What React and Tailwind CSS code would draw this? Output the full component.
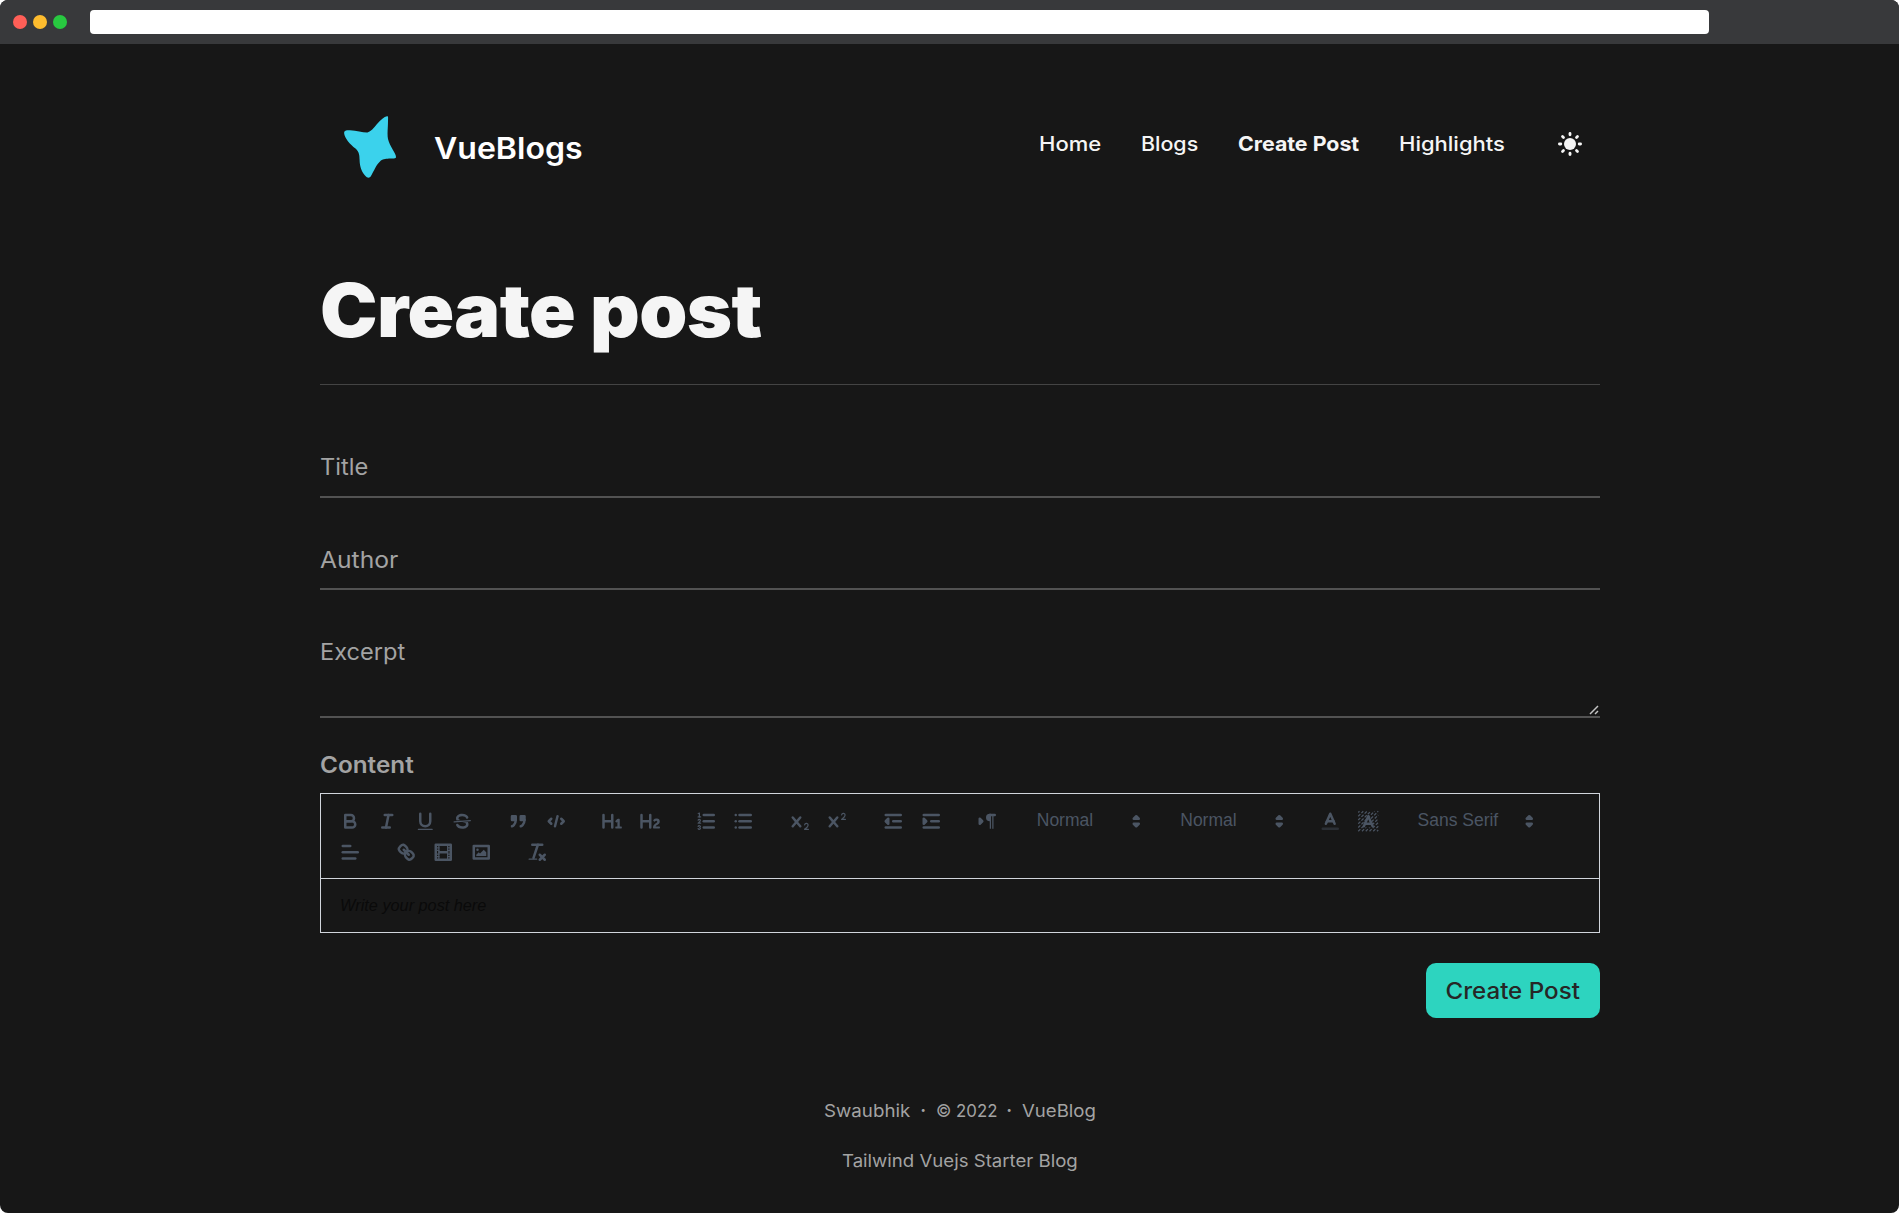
import React from "react";

const stroke = { fill: "none", stroke: "currentColor", strokeWidth: 2, strokeLinecap: "round", strokeLinejoin: "round" };
const thin = { ...stroke, strokeWidth: 1 };
const solid = { ...stroke, fill: "currentColor" };
const fill = { fill: "currentColor" };
const L = ({ p, s = stroke }) => <line x1={p[0]} y1={p[1]} x2={p[2]} y2={p[3]} {...s} />;
const X_GLYPH =
  "M9.65,5.241a1,1,0,0,0-1.409.108L6,7.964,3.759,5.349A1,1,0,0,0,2.192,6.59178Q2.21541,6.6213,2.241,6.649L4.684,9.5,2.241,12.35A1,1,0,0,0,3.71,13.70722q0.02557-.02768.049-0.05722L6,11.036,8.241,13.65a1,1,0,1,0,1.567-1.24277Q9.78459,12.3777,9.759,12.35L7.316,9.5,9.759,6.651A1,1,0,0,0,9.65,5.241Z";

const hatch = [];
for (let k = 3; k <= 33; k += 3) {
  const a = Math.max(1, k - 17);
  const b = Math.min(17, k - 1);
  if (b > a) hatch.push([a, k - a, b, k - b]);
}

const icons = {
  bold: (
    <>
      <path {...stroke} d="M5,4H9.5A2.5,2.5,0,0,1,12,6.5v0A2.5,2.5,0,0,1,9.5,9H5A0,0,0,0,1,5,9V4A0,0,0,0,1,5,4Z" />
      <path {...stroke} d="M5,9h5.5A2.5,2.5,0,0,1,13,11.5v0A2.5,2.5,0,0,1,10.5,14H5a0,0,0,0,1,0,0V9A0,0,0,0,1,5,9Z" />
    </>
  ),
  italic: (
    <>
      <L p={[7, 4, 13, 4]} />
      <L p={[5, 14, 11, 14]} />
      <L p={[8, 14, 10, 4]} />
    </>
  ),
  underline: (
    <>
      <path {...stroke} d="M5,3V9a4.012,4.012,0,0,0,4,4H9a4.012,4.012,0,0,0,4-4V3" />
      <rect {...fill} height="1" rx="0.5" ry="0.5" width="12" x="3" y="15" />
    </>
  ),
  strike: (
    <>
      <L p={[15.5, 8.5, 2.5, 9.5]} s={thin} />
      <path {...fill} d="M9.007,8C6.542,7.791,6,7.519,6,6.5,6,5.792,7.283,5,9,5c1.571,0,2.765.679,2.969,1.309a1,1,0,0,0,1.9-.617C13.356,4.106,11.354,3,9,3,6.2,3,4,4.538,4,6.5a3.2,3.2,0,0,0,.5,1.843Z" />
      <path {...fill} d="M8.984,10C11.457,10.208,12,10.479,12,11.5c0,.708-1.283,1.5-3,1.5-1.571,0-2.765-.679-2.969-1.309a1,1,0,1,0-1.9.617C4.644,13.894,6.646,15,9,15c2.8,0,5-1.538,5-3.5a3.2,3.2,0,0,0-.5-1.843Z" />
    </>
  ),
  quote: (
    <>
      <rect {...solid} height="3" width="3" x="4" y="5" />
      <rect {...solid} height="3" width="3" x="11" y="5" />
      <path {...solid} d="M7,8c0,4.031-3,5-3,5" />
      <path {...solid} d="M14,8c0,4.031-3,5-3,5" />
    </>
  ),
  code: (
    <>
      <polyline {...stroke} points="5 7 3 9 5 11" />
      <polyline {...stroke} points="13 7 15 9 13 11" />
      <L p={[10, 5, 8, 13]} />
    </>
  ),
  h1: (
    <path {...fill} d="M10,4V14a1,1,0,0,1-2,0V10H3v4a1,1,0,0,1-2,0V4A1,1,0,0,1,3,4V8H8V4a1,1,0,0,1,2,0Zm6.06787,9.209H14.98975V7.59863a.54085.54085,0,0,0-.605-.60547h-.62744a1.01119,1.01119,0,0,0-.748.29688L11.645,8.56641a.5435.5435,0,0,0-.022.8584l.28613.30762a.53861.53861,0,0,0,.84717.0332l.09912-.08789a1.2137,1.2137,0,0,0,.2417-.35254h.02246s-.01123.30859-.01123.60547V13.209H12.041a.54085.54085,0,0,0-.605.60547v.43945a.54085.54085,0,0,0,.605.60547h4.02686a.54085.54085,0,0,0,.605-.60547v-.43945A.54085.54085,0,0,0,16.06787,13.209Z" />
  ),
  h2: (
    <path {...fill} d="M16.73975,13.81445v.43945a.54085.54085,0,0,1-.605.60547H11.855a.58392.58392,0,0,1-.64893-.60547V14.0127c0-2.90527,3.39941-3.42187,3.39941-4.55469a.77675.77675,0,0,0-.84717-.78125,1.17684,1.17684,0,0,0-.83594.38477c-.2749.26367-.561.374-.85791.13184l-.4292-.34082c-.30811-.24219-.38525-.51758-.1543-.81445a2.97155,2.97155,0,0,1,2.45361-1.17676,2.45393,2.45393,0,0,1,2.68408,2.40918c0,2.45312-3.1792,2.92676-3.27832,3.93848h2.79443A.54085.54085,0,0,1,16.73975,13.81445ZM9,3A.99974.99974,0,0,0,8,4V8H3V4A1,1,0,0,0,1,4V14a1,1,0,0,0,2,0V10H8v4a1,1,0,0,0,2,0V4A.99974.99974,0,0,0,9,3Z" />
  ),
  ordered: (
    <>
      <L p={[7, 4, 15, 4]} />
      <L p={[7, 9, 15, 9]} />
      <L p={[7, 14, 15, 14]} />
      <L p={[2.5, 5.5, 4.5, 5.5]} s={thin} />
      <path {...fill} d="M3.5,6A0.5,0.5,0,0,1,3,5.5V3.085l-0.276.138A0.5,0.5,0,0,1,2.053,3c-0.124-.247-0.023-0.324.224-0.447l1-.5A0.5,0.5,0,0,1,4,2.5v3A0.5,0.5,0,0,1,3.5,6Z" />
      <path {...thin} d="M4.5,10.5h-2c0-.234,1.85-1.076,1.85-2.234A0.959,0.959,0,0,0,2.5,8.156" />
      <path {...thin} d="M2.5,14.846a0.959,0.959,0,0,0,1.85-.109A0.7,0.7,0,0,0,3.75,14a0.688,0.688,0,0,0,.6-0.736,0.959,0.959,0,0,0-1.85-.109" />
    </>
  ),
  bullet: (
    <>
      {[4, 9, 14].map((y) => (
        <g key={y}>
          <L p={[6, y, 15, y]} />
          <L p={[3, y, 3, y]} />
        </g>
      ))}
    </>
  ),
  sub: (
    <>
      <path {...fill} d="M15.5,15H13.861a3.858,3.858,0,0,0,1.914-2.975,1.8,1.8,0,0,0-1.6-1.751A1.921,1.921,0,0,0,12.021,11.7a0.50013,0.50013,0,1,0,.957.291h0a0.914,0.914,0,0,1,1.053-.725,0.81,0.81,0,0,1,.744.762c0,1.076-1.16971,1.86982-1.93971,2.43082A1.45639,1.45639,0,0,0,12,15.5a0.5,0.5,0,0,0,.5.5h3A0.5,0.5,0,0,0,15.5,15Z" />
      <path {...fill} d={X_GLYPH} />
    </>
  ),
  sup: (
    <>
      <path {...fill} d="M15.5,7H13.861a4.015,4.015,0,0,0,1.914-2.975,1.8,1.8,0,0,0-1.6-1.751A1.922,1.922,0,0,0,12.021,3.7a0.5,0.5,0,1,0,.957.291,0.917,0.917,0,0,1,1.053-.725,0.81,0.81,0,0,1,.744.762c0,1.077-1.164,1.925-1.934,2.486A1.423,1.423,0,0,0,12,7.5a0.5,0.5,0,0,0,.5.5h3A0.5,0.5,0,0,0,15.5,7Z" />
      <path {...fill} d={X_GLYPH} />
    </>
  ),
  outdent: (
    <>
      <L p={[3, 14, 15, 14]} />
      <L p={[3, 4, 15, 4]} />
      <L p={[9, 9, 15, 9]} />
      <polyline {...solid} points="5 7 5 11 3 9 5 7" />
    </>
  ),
  indent: (
    <>
      <L p={[3, 14, 15, 14]} />
      <L p={[3, 4, 15, 4]} />
      <L p={[9, 9, 15, 9]} />
      <polyline {...solid} points="3 7 3 11 5 9 3 7" />
    </>
  ),
  direction: (
    <>
      <polygon {...solid} points="3 11 5 9 3 7 3 11" />
      <L p={[15, 4, 11, 4]} />
      <path {...fill} d="M11,3a3,3,0,0,0,0,6h1V3H11Z" />
      <rect {...fill} height="11" width="1" x="11" y="4" />
      <rect {...fill} height="11" width="1" x="13" y="4" />
    </>
  ),
  color: (
    <>
      <g opacity="0.4">
        <L p={[3, 15, 15, 15]} />
      </g>
      <polyline {...stroke} points="5.5 11 9 3 12.5 11" />
      <L p={[11.63, 9, 6.38, 9]} />
    </>
  ),
  background: (
    <>
      <g strokeDasharray="2.4 1.2">
        {hatch.map((p, i) => (
          <line key={i} x1={p[0]} y1={p[1]} x2={p[2]} y2={p[3]} stroke="currentColor" strokeWidth="1" />
        ))}
      </g>
      <polygon points="5 14 9 4 13 14" fill="#171717" />
      <polyline {...stroke} points="5.5 13 9 5 12.5 13" />
      <L p={[11.63, 11, 6.38, 11]} />
    </>
  ),
  align: (
    <>
      <L p={[3, 9, 15, 9]} />
      <L p={[3, 14, 13, 14]} />
      <L p={[3, 4, 9, 4]} />
    </>
  ),
  link: (
    <>
      <L p={[7, 7, 11, 11]} />
      <path {...stroke} d="M8.9,4.577a3.476,3.476,0,0,1,.36,4.679A3.476,3.476,0,0,1,4.577,8.9C3.185,7.5,2.035,6.4,4.217,4.217S7.5,3.185,8.9,4.577Z" />
      <path {...stroke} d="M13.423,9.1a3.476,3.476,0,0,0-4.679-.36,3.476,3.476,0,0,0,.36,4.679c1.392,1.392,2.5,2.542,4.679.36S14.815,10.5,13.423,9.1Z" />
    </>
  ),
  video: (
    <>
      <rect {...stroke} height="12" width="12" x="3" y="3" />
      <rect {...fill} height="12" width="1" x="5" y="3" />
      <rect {...fill} height="12" width="1" x="12" y="3" />
      <rect {...fill} height="2" width="8" x="5" y="8" />
      {[5, 7, 10, 12].map((y) => (
        <g key={y}>
          <rect {...fill} height="1" width="3" x="3" y={y} />
          <rect {...fill} height="1" width="3" x="12" y={y} />
        </g>
      ))}
    </>
  ),
  image: (
    <>
      <rect {...stroke} height="10" width="12" x="3" y="4" />
      <circle {...fill} cx="6" cy="7" r="1" />
      <polyline {...fill} points="5 12 5 11 7 9 8 10 11 7 13 9 13 12 5 12" />
    </>
  ),
  clean: (
    <>
      <L p={[5, 3, 13, 3]} />
      <L p={[6, 13.5, 9.5, 3]} />
      <L p={[11, 11, 15, 15]} />
      <L p={[15, 11, 11, 15]} />
      <rect {...fill} height="1" rx="0.5" ry="0.5" width="7" x="2" y="14" />
    </>
  ),
  arrows: (
    <>
      <polygon {...stroke} points="7 11 9 13 11 11 7 11" />
      <polygon {...stroke} points="7 7 9 5 11 7 7 7" />
    </>
  ),
};

const Icon = ({ name }) => (
  <svg className="size-[22.5px] shrink-0" viewBox="0 0 18 18">
    {icons[name]}
  </svg>
);

const Group = ({ names }) => (
  <div className="mr-[18.75px] flex">
    {names.map((n) => (
      <button key={n} type="button" className="flex h-[31.25px] w-[37.5px] items-center justify-center">
        <Icon name={n} />
      </button>
    ))}
  </div>
);

const Picker = ({ label, className }) => (
  <div className={`flex h-[31.25px] items-center justify-between pl-[12px] ${className}`}>
    <span className="relative -top-px font-['Liberation_Sans',Arial,sans-serif] text-[17.5px] leading-[22px]">{label}</span>
    <Icon name="arrows" />
  </div>
);

const Wide = ({ className, children }) => <span className={`inline-block origin-left whitespace-nowrap ${className}`}>{children}</span>;

const Sun = () => (
  <svg className="h-6 w-6 text-neutral-100" viewBox="0 0 24 24">
    <circle cx="12" cy="12" r="6" fill="currentColor" />
    {[0, 45, 90, 135, 180, 225, 270, 315].map((a) => (
      <line key={a} x1="12" y1="1.4" x2="12" y2="2.8" transform={`rotate(${a} 12 12)`} stroke="currentColor" strokeWidth="2.8" strokeLinecap="round" />
    ))}
  </svg>
);

const Logo = () => (
  <svg className="h-16 w-14 text-[#3bd2ec]" viewBox="0 0 56 64">
    <path
      fill="currentColor"
      d="M45 .3C46.5-.3 46 2 46 5C46 12 45 18 46 23C47.5 30 54 37 54 41C54 43 51 42.3 47 42.6C43 43 40.5 43 38 45.5C34 49 32 55 29 60C27.5 62.3 25.5 62.3 23 59.5C19 55 17.7 49 17.6 44C17.5 39 17.2 36 13.5 32.5C8 28.5 2.5 22 2.1 17C2 14.5 4.5 14.2 8 14.3C15 14.8 21 16.8 25.5 16.6C29 15.5 31.5 12 35 8C39 3.6 42 .8 45 .3Z"
    />
  </svg>
);

export default function App() {
  return (
    <div className="h-[1213px] w-[1899px] overflow-hidden rounded-lg bg-[#171717] font-[Inter,sans-serif] text-[#a3a3a3]">
      <div className="flex h-11 items-center bg-[#38393b] pl-[13px]">
        <div className="flex gap-[6px]">
          <span className="size-[14px] rounded-full bg-[#ff5f57]" />
          <span className="size-[14px] rounded-full bg-[#febc2e]" />
          <span className="size-[14px] rounded-full bg-[#28c840]" />
        </div>
        <div className="ml-[23px] h-6 w-[1619px] rounded-[4px] bg-white" />
      </div>

      <div className="ml-[320px] w-[1280px]">
        <header className="flex h-[226px] items-start justify-between">
          <div className="mt-[72px] flex h-16 items-center pl-[22px]">
            <Logo />
            <span className="ml-[36px] text-[30px] leading-9 font-semibold text-white">
              <Wide className="scale-x-[1.068]">VueBlogs</Wide>
            </span>
          </div>
          <nav className="mt-[85px] mr-[18px] flex h-[30px] items-center text-[20px] leading-[30px] font-medium text-neutral-100">
            <a className="w-[102.5px]">
              <Wide className="scale-x-[1.1]">Home</Wide>
            </a>
            <a className="w-[97px]">
              <Wide className="scale-x-[1.07]">Blogs</Wide>
            </a>
            <a className="w-[161px] font-bold">
              <Wide className="scale-x-[1.067]">Create Post</Wide>
            </a>
            <a className="w-[159px]">
              <Wide className="scale-x-[1.1]">Highlights</Wide>
            </a>
            <Sun />
          </nav>
        </header>

        <h1 className="h-[114px] text-[74px] leading-20 font-black text-neutral-100">
          <Wide className="scale-x-[1.042] tracking-[-0.6px]">Create post</Wide>
        </h1>

        <form className="flex flex-col border-t border-[#444] pt-[62px] text-[22.5px] leading-10">
          <div className="flex border-b-2 border-[#525252] pb-[9px]">
            <Wide className="scale-x-[1.05]">Title</Wide>
          </div>
          <div className="mt-[42px] flex border-b-2 border-[#525252] pb-2">
            <Wide className="scale-x-[1.095]">Author</Wide>
          </div>
          <div className="mt-[42px] flex h-[86px] items-start justify-between border-b-2 border-[#525252]">
            <Wide className="scale-x-[1.049]">Excerpt</Wide>
            <svg className="mt-[73px] mr-px size-[10px]" viewBox="0 0 10 10">
              <path d="M1 9L9 1M6 9L9 6" stroke="#c4c4c4" strokeWidth="1.5" />
            </svg>
          </div>
          <label className="mt-[27px] flex font-semibold">
            <Wide className="scale-x-[1.08]">Content</Wide>
          </label>

          <div className="mt-2 border border-gray-300">
            <div className="flex h-[84px] flex-col pt-[11.4px] pl-[10px] text-[#4b5563]">
              <div className="flex">
                <Group names={["bold", "italic", "underline", "strike"]} />
                <Group names={["quote", "code"]} />
                <Group names={["h1", "h2"]} />
                <Group names={["ordered", "bullet"]} />
                <Group names={["sub", "sup"]} />
                <Group names={["outdent", "indent"]} />
                <Group names={["direction"]} />
                <Picker label="Normal" className="mr-[21px] w-[122.5px]" />
                <Picker label="Normal" className="mr-[21px] w-[122.5px]" />
                <Group names={["color", "background"]} />
                <Picker label="Sans Serif" className="w-[135px]" />
              </div>
              <div className="flex">
                <Group names={["align"]} />
                <Group names={["link", "video", "image"]} />
                <Group names={["clean"]} />
              </div>
            </div>
            <div className="flex h-[54px] items-center border-t border-gray-300 pb-[2px] pl-[19px] font-['Liberation_Sans',Arial,sans-serif] text-[16.25px] leading-6 text-[#0a0a0a] italic">
              Write your post here
            </div>
          </div>

          <button type="button" className="mt-[30px] h-[55px] w-[174px] self-end rounded-[10px] bg-[#2dd4bf] text-[22.5px] font-medium text-neutral-800">
            <span className="inline-block scale-x-[1.073] whitespace-nowrap">Create Post</span>
          </button>
        </form>

        <footer className="mt-[78px] flex flex-col items-center gap-5 text-[17.5px] leading-[30px]">
          <div className="flex">
            <Wide className="w-[87px] scale-x-[1.07]">Swaubhik</Wide>
            <span className="w-[25px] text-center font-bold">·</span>
            <Wide className="w-[61px] scale-x-[0.96]">© 2022</Wide>
            <span className="w-[25px] text-center font-bold">·</span>
            <Wide className="w-[74.5px] scale-x-[1.063]">VueBlog</Wide>
          </div>
          <span className="inline-block scale-x-[1.063]">Tailwind Vuejs Starter Blog</span>
        </footer>
      </div>
    </div>
  );
}
